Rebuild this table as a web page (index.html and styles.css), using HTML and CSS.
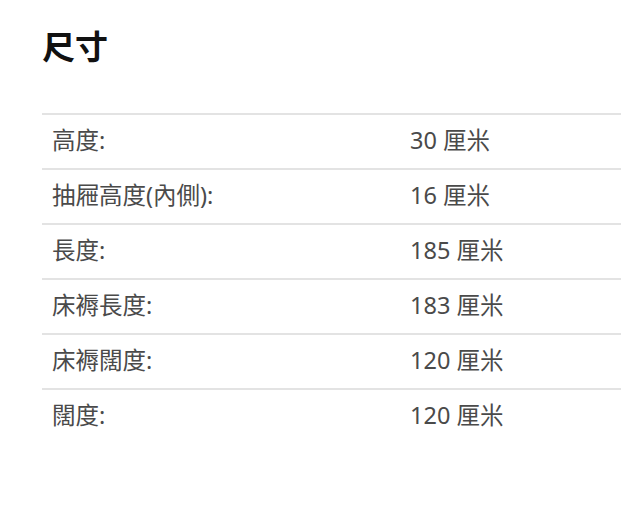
FILE: index.html
```html
<!DOCTYPE html>
<html lang="zh-Hant">
<head>
<meta charset="utf-8">
<link rel="stylesheet" href="styles.css">
</head>
<body>
<section class="dims">
  <h2 class="title">尺寸</h2>
  <table class="spec">
    <tr><td class="k">高度:</td><td class="v">30 厘米</td></tr>
    <tr><td class="k">抽屜高度(內側):</td><td class="v">16 厘米</td></tr>
    <tr><td class="k">長度:</td><td class="v">185 厘米</td></tr>
    <tr><td class="k">床褥長度:</td><td class="v">183 厘米</td></tr>
    <tr><td class="k">床褥闊度:</td><td class="v">120 厘米</td></tr>
    <tr><td class="k">闊度:</td><td class="v">120 厘米</td></tr>
  </table>
</section>
</body>
</html>
```
FILE: styles.css
```css
html, body { margin: 0; padding: 0; background: #fff; }
body { font-family: "Noto Sans", "Noto Sans CJK TC", sans-serif; color: #4a4a4a; }
.dims { padding: 22px 19px 0 42px; }
.title {
  margin: 0 0 45px 0;
  font-size: 33px;
  line-height: 46px;
  font-weight: 700;
  color: #111;
  font-family: "Noto Sans CJK TC", sans-serif;
}
.spec { width: 579px; border-collapse: collapse; }
.spec td {
  border-top: 2px solid #e3e3e3;
  padding: 10px 0 12px 10px;
  font-size: 23.5px;
  line-height: 31px;
  vertical-align: middle;
}
.spec td.k { width: 348px; }
```
